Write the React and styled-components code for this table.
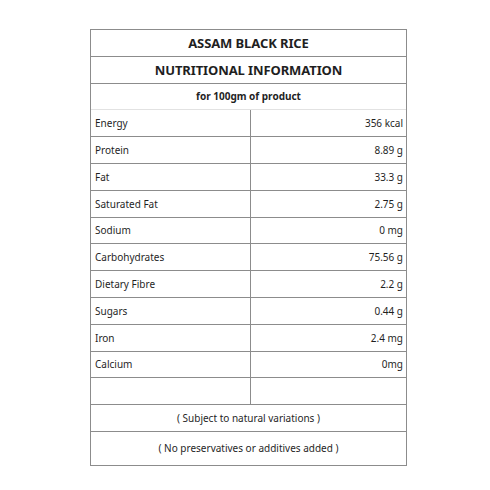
import React from "react";
import styled, { createGlobalStyle } from "styled-components";

const GlobalStyle = createGlobalStyle`
  body {
    margin: 0;
    background: #ffffff;
    font-family: "Noto Sans", "Open Sans", sans-serif;
    color: #1f1f1f;
  }
`;

const Page = styled.div`
  width: 490px;
  height: 490px;
  box-sizing: border-box;
  padding: 29px 0 0 90px;
`;

const Table = styled.div`
  width: 317px;
  box-sizing: border-box;
  border: 1px solid #8c8c8c;
  display: flex;
  flex-direction: column;
`;

const Row = styled.div`
  display: flex;
  align-items: stretch;
  height: ${(p) => (p.$tall ? "33px" : "26.8px")};
  box-sizing: border-box;
  border-bottom: ${(p) =>
    p.$last ? "none" : `1px solid ${p.$faint ? "#e2e2e2" : "#8c8c8c"}`};
`;

const Heading = styled.div`
  flex: 1;
  display: flex;
  align-items: center;
  justify-content: center;
  font-size: ${(p) => (p.$small ? "10px" : "13px")};
  font-weight: 700;
  letter-spacing: ${(p) => (p.$small ? "0" : "-0.1px")};
`;

const Label = styled.div`
  width: 160px;
  box-sizing: border-box;
  border-right: 1px solid #8c8c8c;
  display: flex;
  align-items: center;
  padding-left: 4px;
  font-size: 10px;
`;

const Value = styled.div`
  flex: 1;
  display: flex;
  align-items: center;
  justify-content: flex-end;
  padding-right: 3px;
  font-size: 10px;
`;

const Note = styled.div`
  flex: 1;
  display: flex;
  align-items: center;
  justify-content: center;
  font-size: 10px;
`;

const nutrients = [
  ["Energy", "356 kcal"],
  ["Protein", "8.89 g"],
  ["Fat", "33.3 g"],
  ["Saturated Fat", "2.75 g"],
  ["Sodium", "0 mg"],
  ["Carbohydrates", "75.56 g"],
  ["Dietary Fibre", "2.2 g"],
  ["Sugars", "0.44 g"],
  ["Iron", "2.4 mg"],
  ["Calcium", "0mg"],
  ["", ""],
];

export default function App() {
  return (
    <>
      <GlobalStyle />
      <Page>
        <Table>
          <Row>
            <Heading>ASSAM BLACK RICE</Heading>
          </Row>
          <Row>
            <Heading>NUTRITIONAL INFORMATION</Heading>
          </Row>
          <Row $faint>
            <Heading $small>for 100gm of product</Heading>
          </Row>
          {nutrients.map(([name, amount], i) => (
            <Row key={i}>
              <Label>{name}</Label>
              <Value>{amount}</Value>
            </Row>
          ))}
          <Row>
            <Note>( Subject to natural variations )</Note>
          </Row>
          <Row $tall $last>
            <Note>( No preservatives or additives added )</Note>
          </Row>
        </Table>
      </Page>
    </>
  );
}
